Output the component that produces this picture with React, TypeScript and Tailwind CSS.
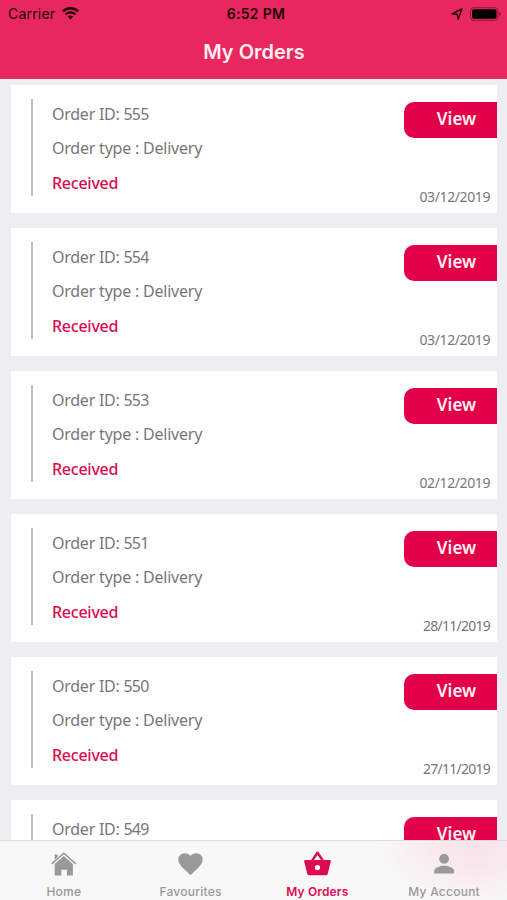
import clsx from "clsx";
import type { ReactNode } from "react";

type Order = { id: number; type: string; status: string; date: string };

const orders: Order[] = [
  { id: 555, type: "Delivery", status: "Received", date: "03/12/2019" },
  { id: 554, type: "Delivery", status: "Received", date: "03/12/2019" },
  { id: 553, type: "Delivery", status: "Received", date: "02/12/2019" },
  { id: 551, type: "Delivery", status: "Received", date: "28/11/2019" },
  { id: 550, type: "Delivery", status: "Received", date: "27/11/2019" },
];

function WifiIcon() {
  return (
    <svg width="17" height="13" viewBox="0 0 17 13" fill="none" stroke="currentColor" strokeWidth="2.4">
      <path d="M0.9 4.4C5.2 0.2 11.8 0.2 16.1 4.4" />
      <path d="M3.6 7.3C6.4 4.7 10.6 4.7 13.4 7.3" />
      <path d="M8.5 12.4L5.7 9.5C7.3 8.1 9.7 8.1 11.3 9.5Z" fill="currentColor" stroke="none" />
    </svg>
  );
}

function LocationIcon() {
  return (
    <svg width="12" height="12" viewBox="0 0 12 12" fill="none" stroke="currentColor" strokeWidth="1.4" strokeLinejoin="round">
      <path d="M0.8 5.9L11 1L7.1 11.2L6.2 6.2Z" />
    </svg>
  );
}

function BatteryIcon() {
  return (
    <svg width="32" height="14" viewBox="0 0 32 14">
      <rect x="0.5" y="0.7" width="27.6" height="12.6" rx="3.2" fill="none" stroke="#000" strokeOpacity="0.4" />
      <rect x="2.1" y="2.3" width="24.4" height="9.4" rx="1.8" />
      <path d="M29.5 5C31.3 5.6 31.3 8.4 29.5 9Z" fillOpacity="0.45" />
    </svg>
  );
}

function HomeIcon() {
  return (
    <svg width="26" height="26" viewBox="0 0 26 26" fill="currentColor">
      <path d="M4.6 3.4H7.6V6L4.6 8.8Z" />
      <path d="M1.8 12.9L13.8 2.2L25.8 12.9" fill="none" stroke="currentColor" strokeWidth="1.6" />
      <path d="M13.8 4.9L22.9 13V24.4H16.9V18.8H11.3V24.4H4.7V13Z" />
    </svg>
  );
}

function HeartIcon() {
  return (
    <svg width="26" height="26" viewBox="0 0 26 26" fill="currentColor">
      <path d="M13.5 24L11.7 22.4C5.4 16.7 1.3 13 1.3 8.5C1.3 5 4.2 2.2 7.9 2.2C10 2.2 12.1 3.2 13.5 4.7C14.9 3.2 17 2.2 19.1 2.2C22.8 2.2 25.7 5 25.7 8.5C25.7 13 21.6 16.7 15.3 22.4Z" />
    </svg>
  );
}

function BasketIcon() {
  return (
    <svg width="28" height="26" viewBox="0 0 28 26" fill="currentColor" fillRule="evenodd">
      <path d="M13.2 1.2C13.7 0.4 15.3 0.4 15.8 1.2L20.8 9.1H26.6C27.5 9.1 28 9.7 27.8 10.5L24.8 22.4C24.5 23.6 23.7 24.3 22.6 24.3H6.4C5.3 24.3 4.5 23.6 4.2 22.4L1.2 10.5C1 9.7 1.5 9.1 2.4 9.1H8.2ZM14.5 3.9L11 9.1H18ZM14.5 14A2.6 2.6 0 1 0 14.5 19.2A2.6 2.6 0 1 0 14.5 14Z" />
    </svg>
  );
}

function AccountIcon() {
  return (
    <svg width="26" height="26" viewBox="0 0 26 26" fill="currentColor">
      <circle cx="13.1" cy="7.9" r="4.9" />
      <path d="M3.1 22.4V20C3.1 16.6 9.8 14.8 13.1 14.8S23.1 16.6 23.1 20V22.4Z" />
    </svg>
  );
}

function Header() {
  return (
    <header className="h-[79px] shrink-0 bg-[#e8275f] font-['Inter',sans-serif]">
      <div className="grid h-[27px] grid-cols-3 items-center pr-[5px] pl-2 text-[#26000c]">
        <div className="flex items-center gap-[7px] text-[14px] tracking-[0.2px]">
          Carrier
          <WifiIcon />
        </div>
        <p className="pl-[2px] text-center text-[14px] font-semibold tracking-[0.3px] whitespace-nowrap">6:52 PM</p>
        <div className="flex items-center justify-end gap-[7px]">
          <LocationIcon />
          <BatteryIcon />
        </div>
      </div>
      <h1 className="pl-px text-center text-[20px] leading-[50px] font-semibold text-[#ffeef3]">My Orders</h1>
    </header>
  );
}

function OrderId({ id }: { id: number }) {
  return (
    <p className="tracking-[-0.25px]">
      Order ID: <span className="tracking-[-0.75px]">{id}</span>
    </p>
  );
}

function ViewButton() {
  return (
    <button
      type="button"
      className="h-9 w-[93px] rounded-l-[10px] bg-[#e20048] pb-0.5 pl-3 text-[17px] leading-[34px] font-semibold text-[#fff0f5]"
    >
      View
    </button>
  );
}

function OrderCard({ order }: { order: Order }) {
  return (
    <li className="flex h-[127.5px] shrink-0 bg-white pl-[20px] text-[#777]">
      <div className="mt-[14px] h-[97px] w-[1.5px] bg-[#bdbdbd]" />
      <div className="flex-1 pt-[12px] pl-[19.5px] text-[16px] leading-[34.4px]">
        <OrderId id={order.id} />
        <p className="tracking-[-0.22px]">Order type : {order.type}</p>
        <p className="font-medium tracking-[-0.25px] text-[#dc0a50]">{order.status}</p>
      </div>
      <div className="flex flex-col items-end justify-between pt-[17px] pb-[6px]">
        <ViewButton />
        <p
          className={clsx(
            "pr-[7px] text-[14px] leading-5",
            order.date.includes("/11/") ? "tracking-[-0.75px]" : "tracking-[-0.4px]",
          )}
        >
          {order.date}
        </p>
      </div>
    </li>
  );
}

// The row that is scrolled partly under the tab bar
function PeekCard({ id }: { id: number }) {
  return (
    <li className="flex min-h-0 flex-1 justify-between overflow-hidden bg-white pl-[20px] text-[#777]">
      <div className="flex">
        <div className="mt-[14px] w-[1.5px] bg-[#bdbdbd]" />
        <div className="pt-[12px] pl-[19.5px] text-[16px] leading-[34px]">
          <OrderId id={id} />
        </div>
      </div>
      <div className="pt-[17px]">
        <ViewButton />
      </div>
    </li>
  );
}

function Tab({ icon, label, active }: { icon: ReactNode; label: string; active?: boolean }) {
  return (
    <button
      type="button"
      className={clsx(
        "flex flex-1 flex-col items-center pt-[10px] text-[12px]",
        active ? "font-semibold tracking-[0.15px] text-[#dc0a50]" : "font-medium tracking-[0.25px] text-[#999]",
      )}
    >
      {icon}
      <span className="mt-[7px] pl-px leading-4">{label}</span>
    </button>
  );
}

export default function App() {
  return (
    <div className="flex h-[900px] w-[507px] flex-col overflow-hidden bg-[#eeeef2] font-['Noto_Sans',sans-serif]">
      <Header />
      <ul className="flex min-h-0 flex-1 flex-col gap-[15.5px] overflow-hidden pt-[6px] pr-[10px] pl-[11px]">
        {orders.map((order) => (
          <OrderCard key={order.id} order={order} />
        ))}
        <PeekCard id={549} />
      </ul>
      <nav className="flex h-[60px] shrink-0 border-t border-[#dcdadc] bg-[#f8f8f8] bg-[radial-gradient(ellipse_95px_60px_at_475px_4px,#f8e2e9,#f8eaef_45%,#f8f8f8)] font-['Inter',sans-serif]">
        <Tab icon={<HomeIcon />} label="Home" />
        <Tab icon={<HeartIcon />} label="Favourites" />
        <Tab icon={<BasketIcon />} label="My Orders" active />
        <Tab icon={<AccountIcon />} label="My Account" />
      </nav>
    </div>
  );
}
